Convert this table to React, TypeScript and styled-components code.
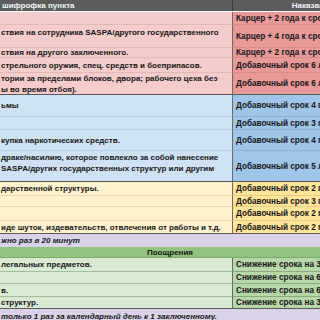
import React from 'react'
import styled, { createGlobalStyle } from 'styled-components'

const GlobalStyle = createGlobalStyle`
  html, body {
    margin: 0;
    padding: 0;
    background: #fff;
  }
  body {
    width: 320px;
    height: 320px;
    overflow: hidden;
    font-family: 'Liberation Sans', Arial, sans-serif;
  }
`

type Tone = 'red' | 'blue' | 'yellow' | 'green'

const tones: Record<Tone, { left: string; right: string; line: string; lineRight: string }> = {
    red: { left: '#f4cccc', right: '#ea9999', line: '#e2b9b9', lineRight: '#d98a8a' },
    blue: { left: '#cfe2f3', right: '#9fc5e8', line: '#b9cfe2', lineRight: '#8bb1d5' },
    yellow: { left: '#fff2cc', right: '#ffe599', line: '#e8dab4', lineRight: '#e6cd84' },
    green: { left: '#d9ead3', right: '#b6d7a8', line: '#a7b9a1', lineRight: '#8ea884' },
}

type Row = { h: number; left?: string[]; right: string; lift?: number }
type Section = { tone: Tone; rows: Row[] }

const punishments: Section[] = [
    {
        tone: 'red',
        rows: [
            { h: 13, right: 'Карцер + 2 года к сроку' },
            { h: 23, left: ['ствия на сотрудника SASPA/другого государственного'], right: 'Карцер + 4 года к сроку', lift: 4 },
            { h: 10, left: ['ствия на другого заключенного.'], right: 'Карцер + 2 года к сроку' },
            { h: 15, left: ['стрельного оружия, спец. средств и боеприпасов.'], right: 'Добавочный срок 6 лет' },
            { h: 22, left: ['тории за пределами блоков, двора; рабочего цеха без', 'ы во время отбоя).'], right: 'Добавочный срок 6 лет' },
        ],
    },
    {
        tone: 'blue',
        rows: [
            { h: 22, left: ['ьмы'], right: 'Добавочный срок 4 года' },
            { h: 13, right: 'Добавочный срок 3 года' },
            { h: 21, left: ['купка наркотических средств.'], right: 'Добавочный срок 4 года' },
            { h: 31, left: ['драке/насилию, которое повлекло за собой нанесение', 'SASPA/других государственных структур или другим'], right: 'Добавочный срок 5 лет', lift: 3 },
        ],
    },
    {
        tone: 'yellow',
        rows: [
            { h: 14, left: ['дарственной структуры.'], right: 'Добавочный срок 2 года' },
            { h: 11, right: 'Добавочный срок 3 года' },
            { h: 14, right: 'Добавочный срок 2 года' },
            { h: 13, left: ['иде шуток, издевательств, отвлечения от работы и т.д.'], right: 'Добавочный срок 2 года' },
        ],
    },
]

const rewards: Section = {
    tone: 'green',
    rows: [
        { h: 14, left: ['легальных предметов.'], right: 'Снижение срока на 3 дня' },
        { h: 12, right: 'Снижение срока на 6 дней' },
        { h: 13, left: ['в.'], right: 'Снижение срока на 6 дней' },
        { h: 12, left: ['структур.'], right: 'Снижение срока на 3 дня' },
    ],
}

// the sheet is cropped: its first column starts off-screen to the left
const Sheet = styled.div`
  display: flex;
  flex-direction: column;
  width: 392px;
  font-size: 8px;
  line-height: 11px;
  font-weight: bold;
  color: #161616;
`

const Line = styled.div<{ $h: number; $border?: string }>`
  display: grid;
  grid-template-columns: 232px 160px;
  height: ${p => p.$h}px;
  box-sizing: border-box;
  border-bottom: 1px solid ${p => p.$border || 'transparent'};
`

const HeadCell = styled.div<{ $divider?: boolean }>`
  display: flex;
  align-items: center;
  justify-content: ${p => (p.$divider ? 'center' : 'flex-start')};
  padding-left: ${p => (p.$divider ? 0 : 2)}px;
  background: #5c5c5c;
  color: #f4f4f4;
  font-size: 8px;
  border-left: ${p => (p.$divider ? '1px solid #3a3a3a' : 'none')};
`

const TextCell = styled.div<{ $bg: string; $lift?: number }>`
  display: flex;
  flex-direction: column;
  justify-content: center;
  padding-left: 1px;
  padding-bottom: ${p => (p.$lift || 0) * 2}px;
  background: ${p => p.$bg};
  white-space: nowrap;
  overflow: hidden;
`

const PenaltyCell = styled.div<{ $bg: string; $line: string }>`
  display: flex;
  align-items: center;
  padding-left: 3px;
  margin-bottom: -1px;
  background: ${p => p.$bg};
  border-left: 1px solid #6a6a6a;
  border-bottom: 1px solid ${p => p.$line};
  font-size: 8.2px;
  white-space: nowrap;
  overflow: hidden;
`

const Note = styled.div<{ $h: number }>`
  display: flex;
  align-items: center;
  height: ${p => p.$h}px;
  padding-left: 1px;
  background: #d9d2e9;
  font-style: italic;
  white-space: nowrap;
`

const GroupTitle = styled.div`
  display: flex;
  align-items: center;
  justify-content: center;
  height: 11px;
  padding-right: 52px;
  background: #93c47d;
  box-sizing: border-box;
  border-bottom: 1px solid #7fa86c;
`

function Rows({ section }: { section: Section }) {
    const t = tones[section.tone]
    return (
        <>
            {section.rows.map((row, i) => {
                const last = i === section.rows.length - 1
                const border = last ? '#5a5a5a' : t.line
                return (
                    <Line key={i} $h={row.h} $border={border}>
                        <TextCell $bg={t.left} $lift={row.lift}>
                            {(row.left || []).map((l, j) => (
                                <span key={j}>{l}</span>
                            ))}
                        </TextCell>
                        <PenaltyCell $bg={t.right} $line={last ? '#5a5a5a' : t.lineRight}>
                            {row.right}
                        </PenaltyCell>
                    </Line>
                )
            })}
        </>
    )
}

export default function App() {
    return (
        <>
            <GlobalStyle />
            <Sheet>
                <Line $h={12}>
                    <HeadCell>шифрофка пункта</HeadCell>
                    <HeadCell $divider>Наказание</HeadCell>
                </Line>
                {punishments.map((s, i) => (
                    <Rows key={i} section={s} />
                ))}
                <Note $h={13}>жно раз в 20 минут</Note>
                <GroupTitle>Поощрения</GroupTitle>
                <Rows section={rewards} />
                <Note $h={14}>только 1 раз за календарный день к 1 заключенному.</Note>
            </Sheet>
        </>
    )
}
